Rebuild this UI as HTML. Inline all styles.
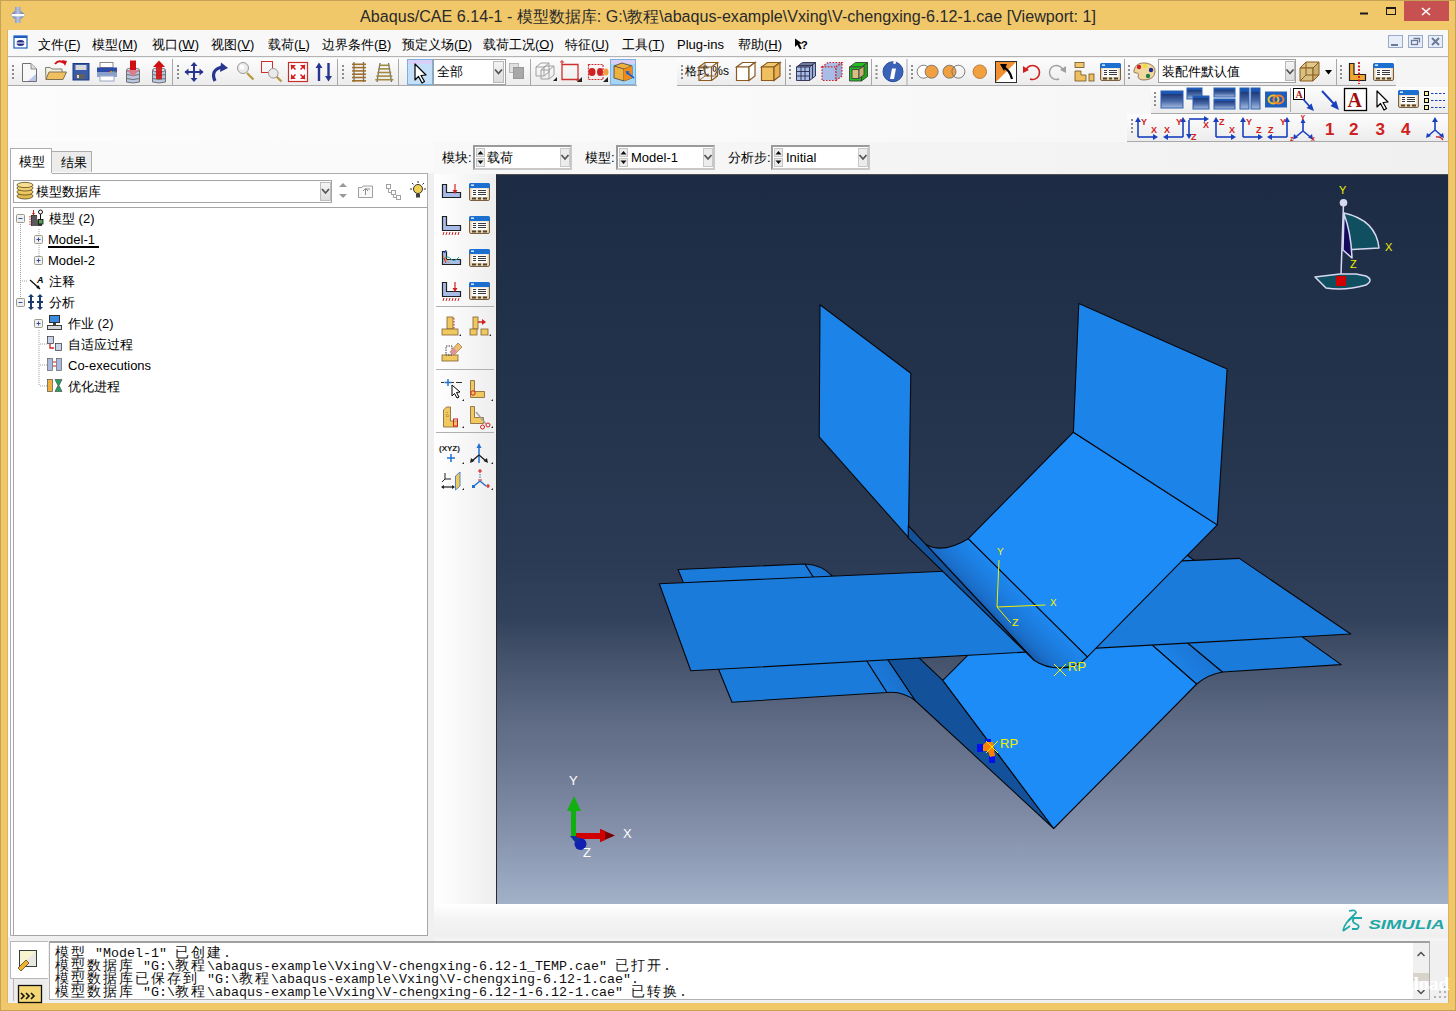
<!DOCTYPE html><html><head><meta charset="utf-8"><style>
*{margin:0;padding:0;box-sizing:border-box}
html,body{width:1456px;height:1011px;overflow:hidden;background:#f0c86a;font-family:"Liberation Sans",sans-serif;font-size:13px;color:#000}
.a{position:absolute;white-space:nowrap}
.t{position:absolute;white-space:nowrap;font-size:13px;line-height:15px;color:#000}
.tb{position:absolute;background:linear-gradient(#fdfdfd,#eeeeee);border-bottom:1px solid #a9a9a9}
.mono{position:absolute;font-family:"Liberation Mono",monospace;font-size:13.33px;line-height:13px;white-space:pre;color:#000}
.cj{letter-spacing:2px;font-size:14px}
u{text-decoration:underline;text-underline-offset:1px}
</style></head><body>
<div class="a" style="left:0px;top:0px;width:1456px;height:1011px;background:#f0c86a;border:1px solid #c7a254"></div>
<div class="t" style="left:0px;top:7px;width:1456px;text-align:center;font-size:16.13px;line-height:18px;color:#2a2a2a">Abaqus/CAE 6.14-1 - 模型数据库: G:\教程\abaqus-example\Vxing\V-chengxing-6.12-1.cae [Viewport: 1]</div>
<div class="a" style="left:1404px;top:1px;width:45px;height:20px;background:#c75050"></div>
<div class="a" style="left:8px;top:30px;width:1440px;height:973px;background:#f0f0f0"></div>
<div class="a" style="left:8px;top:30px;width:1440px;height:27px;background:#f8f8f8;border-bottom:1px solid #b4b4b4"></div>
<div class="a" style="left:8px;top:58px;width:1440px;height:84px;background:linear-gradient(90deg,#fcfcfc 0%,#f9f9f9 55%,#f5f5f5 100%)"></div>
<div class="a" style="left:8px;top:58px;width:629px;height:28px;background:linear-gradient(#fdfdfd,#ececec);border-bottom:1px solid #a9a9a9"></div>
<div class="a" style="left:677px;top:58px;width:719px;height:28px;background:linear-gradient(#fdfdfd,#ececec);border-bottom:1px solid #a9a9a9"></div>
<div class="a" style="left:1151px;top:87px;width:297px;height:27px;background:linear-gradient(#fdfdfd,#ececec);border-bottom:1px solid #a9a9a9"></div>
<div class="a" style="left:1127px;top:114px;width:321px;height:28px;background:linear-gradient(#fdfdfd,#ececec);border-bottom:1px solid #a9a9a9"></div>
<div class="a" style="left:434px;top:142px;width:1014px;height:32px;background:linear-gradient(90deg,#f8f8f8,#f0f0f0)"></div>
<div class="a" style="left:8px;top:142px;width:426px;height:31px;background:#fafafa"></div>
<div class="a" style="left:8px;top:173px;width:2px;height:764px;background:#fdfdfd"></div>
<div class="a" style="left:7px;top:30px;width:1px;height:973px;background:#dcb460"></div>
<div class="a" style="left:1448px;top:30px;width:1px;height:973px;background:#dcb460"></div>
<div class="a" style="left:10px;top:173px;width:418px;height:763px;background:#fff;border:1px solid #adadad"></div>
<div class="a" style="left:434px;top:174px;width:62px;height:730px;background:linear-gradient(90deg,#ffffff,#eeeeee)"></div>
<div class="a" style="left:496px;top:174px;width:952px;height:730px;background:linear-gradient(#1d2b45 0%,#213049 17%,#27364f 40%,#2c3b55 53%,#33425c 61%,#45526c 66.4%,#626e88 76%,#67738d 79%,#8591ab 90%,#a2b0c8 100%);border-left:1px solid #2a2a2a;border-top:1px solid #505050"></div>
<div class="a" style="left:434px;top:904px;width:1014px;height:38px;background:linear-gradient(#ffffff,#f4f4f4 40%,#efefef 85%,#f8f8f8)"></div>
<div class="a" style="left:428px;top:936px;width:6px;height:6px;background:#f0f0f0"></div>
<div class="a" style="left:10px;top:941px;width:1438px;height:62px;background:#f0f0f0"></div>
<div class="a" style="left:49px;top:941px;width:1381px;height:59px;background:#fff;border-top:2px solid #a0a0a0;border-left:1px solid #b0b0b0;border-right:1px solid #b0b0b0;border-bottom:1px solid #b0b0b0"></div>
<div class="a" style="left:1413px;top:943px;width:16px;height:56px;background:#f0f0f0"></div>
<div class="a" style="left:1413px;top:973px;width:16px;height:8px;background:#d8d4cc"></div>
<div class="t" style="left:38px;top:37px;font-size:13px">文件(<u>F</u>)</div>
<div class="t" style="left:92px;top:37px;font-size:13px">模型(<u>M</u>)</div>
<div class="t" style="left:152px;top:37px;font-size:13px">视口(<u>W</u>)</div>
<div class="t" style="left:211px;top:37px;font-size:13px">视图(<u>V</u>)</div>
<div class="t" style="left:268px;top:37px;font-size:13px">载荷(<u>L</u>)</div>
<div class="t" style="left:322px;top:37px;font-size:13px">边界条件(<u>B</u>)</div>
<div class="t" style="left:402px;top:37px;font-size:13px">预定义场(<u>D</u>)</div>
<div class="t" style="left:483px;top:37px;font-size:13px">载荷工况(<u>O</u>)</div>
<div class="t" style="left:565px;top:37px;font-size:13px">特征(<u>U</u>)</div>
<div class="t" style="left:622px;top:37px;font-size:13px">工具(<u>T</u>)</div>
<div class="t" style="left:677px;top:37px;font-size:13px">Plug-ins</div>
<div class="t" style="left:738px;top:37px;font-size:13px">帮助(<u>H</u>)</div>
<div class="a" style="left:10px;top:148px;width:42px;height:25px;background:#fff;border:1px solid #adadad;border-bottom:none"></div>
<div class="a" style="left:52px;top:151px;width:40px;height:21px;background:#ececec;border:1px solid #adadad;border-bottom:none;border-left:none"></div>
<div class="a" style="left:11px;top:173px;width:41px;height:1px;background:#fff"></div>
<div class="t" style="left:19px;top:154px;">模型</div>
<div class="t" style="left:61px;top:155px;">结果</div>
<div class="a" style="left:13px;top:180px;width:319px;height:23px;background:#fff;border:1px solid #a5a5a5"></div>
<div class="a" style="left:320px;top:182px;width:11px;height:19px;background:linear-gradient(#f4f4f4,#dedede);border:1px solid #bdbdbd"></div>
<div class="t" style="left:36px;top:184px;">模型数据库</div>
<div class="a" style="left:13px;top:207px;width:415px;height:729px;background:#fff;border:1px solid #a5a5a5"></div>
<div class="t" style="left:49px;top:211px;font-size:13px">模型 (2)</div>
<div class="t" style="left:48px;top:232px;font-size:13px">Model-1</div>
<div class="t" style="left:48px;top:253px;font-size:13px">Model-2</div>
<div class="t" style="left:49px;top:274px;font-size:13px">注释</div>
<div class="t" style="left:49px;top:295px;font-size:13px">分析</div>
<div class="t" style="left:68px;top:316px;font-size:13px">作业 (2)</div>
<div class="t" style="left:68px;top:337px;font-size:13px">自适应过程</div>
<div class="t" style="left:68px;top:358px;font-size:13px">Co-executions</div>
<div class="t" style="left:68px;top:379px;font-size:13px">优化进程</div>
<div class="a" style="left:48px;top:246px;width:51px;height:2px;background:#000"></div>
<div class="t" style="left:442px;top:150px;">模块:</div>
<div class="t" style="left:585px;top:150px;">模型:</div>
<div class="t" style="left:728px;top:150px;">分析步:</div>
<div class="a" style="left:473px;top:145px;width:99px;height:25px;background:#fff;border:2px solid #9a9a9a;border-right-color:#c8c8c8;border-bottom-color:#c8c8c8"></div>
<div class="a" style="left:476px;top:148px;width:9px;height:9px;background:#ececec;border:1px solid #c4c4c4"></div>
<div class="a" style="left:476px;top:158px;width:9px;height:9px;background:#ececec;border:1px solid #c4c4c4"></div>
<div class="a" style="left:560px;top:148px;width:10px;height:19px;background:#ececec;border:1px solid #c8c8c8"></div>
<div class="t" style="left:487px;top:150px;">载荷</div>
<div class="a" style="left:616px;top:145px;width:99px;height:25px;background:#fff;border:2px solid #9a9a9a;border-right-color:#c8c8c8;border-bottom-color:#c8c8c8"></div>
<div class="a" style="left:619px;top:148px;width:9px;height:9px;background:#ececec;border:1px solid #c4c4c4"></div>
<div class="a" style="left:619px;top:158px;width:9px;height:9px;background:#ececec;border:1px solid #c4c4c4"></div>
<div class="a" style="left:703px;top:148px;width:10px;height:19px;background:#ececec;border:1px solid #c8c8c8"></div>
<div class="t" style="left:631px;top:150px;">Model-1</div>
<div class="a" style="left:771px;top:145px;width:99px;height:25px;background:#fff;border:2px solid #9a9a9a;border-right-color:#c8c8c8;border-bottom-color:#c8c8c8"></div>
<div class="a" style="left:774px;top:148px;width:9px;height:9px;background:#ececec;border:1px solid #c4c4c4"></div>
<div class="a" style="left:774px;top:158px;width:9px;height:9px;background:#ececec;border:1px solid #c4c4c4"></div>
<div class="a" style="left:858px;top:148px;width:10px;height:19px;background:#ececec;border:1px solid #c8c8c8"></div>
<div class="t" style="left:786px;top:150px;">Initial</div>
<div class="a" style="left:433px;top:59px;width:73px;height:26px;background:#fff;border:1px solid #a0a0a0"></div>
<div class="a" style="left:493px;top:61px;width:11px;height:22px;background:linear-gradient(#f4f4f4,#dcdcdc);border:1px solid #b8b8b8"></div>
<div class="t" style="left:437px;top:64px;">全部</div>
<div class="a" style="left:1158px;top:59px;width:138px;height:24px;background:#fff;border:1px solid #a0a0a0"></div>
<div class="a" style="left:1285px;top:61px;width:10px;height:20px;background:linear-gradient(#f4f4f4,#dcdcdc);border:1px solid #b8b8b8"></div>
<div class="t" style="left:1162px;top:64px;">装配件默认值</div>
<div class="t" style="left:685px;top:64px;font-size:12px">格式 %s</div>
<div class="mono" style="left:55px;top:947px;color:#101010"><span class="cj">模型</span> "Model-1" <span class="cj">已创建</span>.</div>
<div class="mono" style="left:55px;top:960px;color:#101010"><span class="cj">模型数据库</span> "G:\<span class="cj">教程</span>\abaqus-example\Vxing\V-chengxing-6.12-1_TEMP.cae" <span class="cj">已打开</span>.</div>
<div class="mono" style="left:55px;top:973px;color:#101010"><span class="cj">模型数据库已保存到</span> "G:\<span class="cj">教程</span>\abaqus-example\Vxing\V-chengxing-6.12-1.cae".</div>
<div class="mono" style="left:55px;top:986px;color:#101010"><span class="cj">模型数据库</span> "G:\<span class="cj">教程</span>\abaqus-example\Vxing\V-chengxing-6.12-1-6.12-1.cae" <span class="cj">已转换</span>.</div>
<div class="a" style="left:10px;top:941px;width:38px;height:38px;background:#fff;border:1px solid #b8b8b8;border-right:none"></div>
<div class="a" style="left:13px;top:979px;width:34px;height:22px;background:#ececec;border-left:1px solid #b8b8b8"></div>
<svg class="a" style="left:0;top:0" width="1456" height="1011" viewBox="0 0 1456 1011"><defs><linearGradient id="wg" x1="0" y1="0" x2="0" y2="1"><stop offset="0" stop-color="#1a58b8"/><stop offset="0.15" stop-color="#1a58b8"/><stop offset="0.2" stop-color="#203a78"/><stop offset="0.6" stop-color="#4a6aa8"/><stop offset="1" stop-color="#a8bce0"/></linearGradient></defs><defs><linearGradient id="tig" x1="0" x2="1"><stop offset="0" stop-color="#4a62a8"/><stop offset="0.5" stop-color="#b8c4e0"/><stop offset="1" stop-color="#4a62a8"/></linearGradient></defs><path d="M15,7 L20.5,7 L20.5,10.5 L25.2,15 L20.5,19.5 L20.5,23 L15,23 L15,19.5 L10.7,15 L15,10.5 Z" fill="url(#tig)"/><path d="M11.5,14 L24.5,14 L24.5,16.3 L11.5,16.3 Z" fill="#fff"/><rect x="1360" y="12.5" width="8" height="2" fill="#1a1a1a"/><rect x="1386.5" y="7.5" width="9" height="7" fill="none" stroke="#1a1a1a" stroke-width="1"/><rect x="1386" y="7" width="10" height="2" fill="#1a1a1a"/><path d="M1422,8 L1430,15 M1430,8 L1422,15" stroke="#fff" stroke-width="1.6"/><rect x="14" y="36" width="13" height="12" fill="#fff" stroke="#1a5fc0" stroke-width="1.2"/><rect x="14" y="36" width="13" height="2" fill="#1a5fc0"/><ellipse cx="20.5" cy="43" rx="4" ry="3" fill="#2a2f8a"/><rect x="16" y="42.5" width="9" height="1" fill="#fff"/><path d="M795,38.5 L795,47 L797.3,44.8 L800,49.5 L801.8,48.5 L799.3,43.8 L802.3,43.5 Z" fill="#000"/><text x="801" y="48.5" font-family="Liberation Sans" font-size="11" font-weight="bold">?</text><rect x="1388.5" y="35.5" width="14" height="12" fill="#e8eef8" stroke="#9aaac8"/><rect x="1408.5" y="35.5" width="14" height="12" fill="#e8eef8" stroke="#9aaac8"/><rect x="1428.5" y="35.5" width="14" height="12" fill="#e8eef8" stroke="#9aaac8"/><rect x="1391" y="44" width="7" height="2" fill="#6a7a98"/><rect x="1411.5" y="40.5" width="6" height="4" fill="none" stroke="#6a7a98" stroke-width="1.3"/><path d="M1413.5,38.5 h6 v4" fill="none" stroke="#6a7a98" stroke-width="1.3"/><path d="M1432,38 L1439,45 M1439,38 L1432,45" stroke="#6a7a98" stroke-width="2"/><rect x="12" y="65" width="2" height="2" fill="#8c8c8c"/><rect x="12" y="69" width="2" height="2" fill="#8c8c8c"/><rect x="12" y="73" width="2" height="2" fill="#8c8c8c"/><rect x="12" y="77" width="2" height="2" fill="#8c8c8c"/><path d="M22.5,63.5 L31,63.5 L36.5,69 L36.5,81.5 L22.5,81.5 Z" fill="#f8f8f8" stroke="#707070"/><path d="M31,63.5 L31,69 L36.5,69" fill="#ddd" stroke="#909090"/><path d="M28,81 L36,81 L36,74 Z" fill="#b8c8e8"/><path d="M45.5,67.5 L50,67.5 L52,69 L62,69 L62,79.5 L46,79.5 Z" fill="#f4f0e0" stroke="#808070"/><path d="M46,79.5 L49,72 L66.5,72 L63,79.5 Z" fill="#f0c060" stroke="#807050"/><path d="M55,64 Q59,59 64,63" fill="none" stroke="#d01010" stroke-width="2"/><path d="M62,60 L67,61 L65,66 Z" fill="#d01010"/><rect x="73" y="63.5" width="16" height="16.5" fill="#3a5ca8" stroke="#1a3a88"/><rect x="75.5" y="65" width="11" height="5" fill="#d8d8d8"/><rect x="76" y="74" width="9" height="5" fill="#606060"/><rect x="77" y="75" width="2" height="3" fill="#ddd"/><rect x="100" y="62.5" width="13" height="5" fill="#fff" stroke="#888"/><path d="M97,67.5 L117,67.5 L117,77 L97,77 Z" fill="#2c4ca8"/><path d="M97,72 L117,72 L117,77 L97,77 Z" fill="#8ca0d0"/><rect x="100" y="76" width="14" height="5" fill="#fff" stroke="#98a8c8"/><rect x="110" y="71" width="2" height="1.5" fill="#f08020"/><rect x="112.5" y="71" width="2" height="1.5" fill="#20c0a0"/><rect x="115" y="71" width="1.5" height="1.5" fill="#f03030"/><path d="M126.5,70 L126.5,82 Q133,84 139.5,82 L139.5,70" fill="#b8c8e0" stroke="#707070"/><ellipse cx="133" cy="70" rx="6.5" ry="2" fill="#d8e0f0" stroke="#707070"/><path d="M126.5,74.5 Q133,76.5 139.5,74.5 M126.5,78.5 Q133,80.5 139.5,78.5" fill="none" stroke="#707070"/><rect x="130" y="60.5" width="6" height="10" fill="#d01010"/><path d="M127,70 L133,77 L139,70 Z" fill="#d88090"/><path d="M152.5,70 L152.5,82 Q159,84 165.5,82 L165.5,70" fill="#b8c8e0" stroke="#707070"/><ellipse cx="159" cy="70" rx="6.5" ry="2" fill="#d8e0f0" stroke="#707070"/><path d="M152.5,74.5 Q159,76.5 165.5,74.5 M152.5,78.5 Q159,80.5 165.5,78.5" fill="none" stroke="#707070"/><rect x="156" y="66" width="6" height="13" fill="#d01010" opacity="0.9"/><path d="M153,67 L159,60.5 L165,67 Z" fill="#d01010"/><rect x="172" y="59" width="1" height="26" fill="#a8a8a8"/><rect x="177" y="65" width="2" height="2" fill="#8c8c8c"/><rect x="177" y="69" width="2" height="2" fill="#8c8c8c"/><rect x="177" y="73" width="2" height="2" fill="#8c8c8c"/><rect x="177" y="77" width="2" height="2" fill="#8c8c8c"/><path d="M194,63 L194,81 M185,72 L203,72" stroke="#26358f" stroke-width="2"/><path d="M194,62 L190.5,66 L197.5,66 Z M194,82 L190.5,78 L197.5,78 Z M184.5,72 L188.5,68.5 L188.5,75.5 Z M203.5,72 L199.5,68.5 L199.5,75.5 Z" fill="#26358f"/><path d="M215,81 Q210,70 222,67" fill="none" stroke="#26358f" stroke-width="3.2"/><path d="M221,62.5 L228,68 L220,72 Z" fill="#26358f"/><line x1="247" y1="73" x2="253.5" y2="79.5" stroke="#b8983c" stroke-width="2.2"/><circle cx="243" cy="68" r="5.5" fill="#eaeaea" stroke="#9a9a9a"/><circle cx="242" cy="67" r="2.5" fill="#fff"/><rect x="261.5" y="61.5" width="11" height="11" fill="none" stroke="#d03030"/><line x1="276" y1="76" x2="281.5" y2="81.5" stroke="#b8983c" stroke-width="2.2"/><circle cx="273.3" cy="73.3" r="4.8" fill="#eaeaea" stroke="#9a9a9a"/><rect x="288.5" y="62.5" width="19" height="19" fill="#fff" stroke="#c83030" stroke-width="1.2"/><path d="M291,65 L296,65 L291,70 Z M305,65 L300,65 L305,70 Z M291,79 L296,79 L291,74 Z M305,79 L300,79 L305,74 Z" fill="#d82020"/><path d="M291,65 L295.5,69.5 M305,65 L300.5,69.5 M291,79 L295.5,74.5 M305,79 L300.5,74.5" stroke="#d82020" stroke-width="1.5"/><path d="M319,67 L319,81 M328.5,63 L328.5,77" stroke="#26358f" stroke-width="2.4"/><path d="M319,62.5 L315.5,68 L322.5,68 Z M328.5,81.5 L325,76 L332,76 Z" fill="#26358f"/><rect x="337" y="59" width="1" height="26" fill="#a8a8a8"/><rect x="342" y="65" width="2" height="2" fill="#8c8c8c"/><rect x="342" y="69" width="2" height="2" fill="#8c8c8c"/><rect x="342" y="73" width="2" height="2" fill="#8c8c8c"/><rect x="342" y="77" width="2" height="2" fill="#8c8c8c"/><path d="M354,62 L354,82 M363.5,62 L363.5,82" stroke="#707070" stroke-width="1.3"/><rect x="352" y="63.5" width="14" height="1.6" fill="#a0702a"/><rect x="352" y="66.8" width="14" height="1.6" fill="#a0702a"/><rect x="352" y="70.1" width="14" height="1.6" fill="#a0702a"/><rect x="352" y="73.4" width="14" height="1.6" fill="#a0702a"/><rect x="352" y="76.7" width="14" height="1.6" fill="#a0702a"/><rect x="352" y="80.0" width="14" height="1.6" fill="#a0702a"/><path d="M380,63 L377,82 M388.5,63 L391.5,82" stroke="#707070" stroke-width="1.3"/><rect x="379.3" y="64.5" width="10" height="1.6" fill="#a08a40"/><rect x="378.3" y="68.1" width="12" height="1.6" fill="#a08a40"/><rect x="377.3" y="71.7" width="14" height="1.6" fill="#a08a40"/><rect x="376.3" y="75.3" width="16" height="1.6" fill="#a08a40"/><rect x="375.3" y="78.9" width="18" height="1.6" fill="#a08a40"/><rect x="398" y="59" width="1" height="26" fill="#a8a8a8"/><rect x="407.5" y="59.5" width="25" height="25" fill="#c4e0f8" stroke="#7ab0e0"/><rect x="408" y="60" width="24" height="4" fill="#d8d0f8"/><path d="M415,64 L415,80 L418.5,76.5 L422,83 L424.5,81.5 L421,75.5 L426,75 Z" fill="#fff" stroke="#000" stroke-width="1.2" stroke-linejoin="round"/><path d="M495,69.5 L498.5,73.5 L502,69.5" fill="none" stroke="#555" stroke-width="1.8"/><rect x="509.5" y="63.5" width="9" height="9" fill="#e0e0e0" stroke="#b8b8b8"/><rect x="513.5" y="67.5" width="10" height="11" fill="#a8a8a8" stroke="#989898"/><rect x="530" y="59" width="1" height="26" fill="#a8a8a8"/><g fill="none" stroke="#a0a0a0"><path d="M536,67 L541,63 L549,63 L544,67 Z M536,67 L536,76 L544,76 L544,67 M544,76 L549,72 L549,63"/><path d="M541,70 L546,66 L554,66 L554,75 L549,79 L541,79 Z M541,70 L549,70 L549,79 M549,70 L554,66"/></g><path d="M553,81 L557,81 L557,77 Z" fill="#222"/><path d="M562,64.5 L578,64.5 L578,79.5 L562,79.5 Z" fill="none" stroke="#d03030" stroke-width="1.3"/><path d="M560,62 h4 M562,60 v4 M576,80 h4 M578,78 v4" stroke="#d03030"/><path d="M577,82 L582,82 L582,77 Z" fill="#222"/><path d="M588.5,64.5 L603,64.5 L603,79.5 L588.5,79.5 Z" fill="none" stroke="#d03030" stroke-width="1.2" stroke-dasharray="2,1"/><ellipse cx="592" cy="72" rx="3.5" ry="4" fill="#d02020"/><ellipse cx="600" cy="72" rx="3" ry="4" fill="#d02020"/><ellipse cx="606" cy="72" rx="2.5" ry="3.5" fill="#f0a040"/><path d="M603,82 L608,82 L608,77 Z" fill="#222"/><rect x="610.5" y="59.5" width="25" height="25" fill="#a8d4f4" stroke="#7ab0e0"/><rect x="611" y="60" width="24" height="4" fill="#d8d0f8"/><path d="M614,66 L622,63 L632,66 L632,78 L624,81 L614,78 Z" fill="#f0b040" stroke="#404040" stroke-width="0.8"/><path d="M614,66 L624,69 L632,66 M624,69 L624,81" fill="none" stroke="#404040" stroke-width="0.8"/><path d="M624,69 L632,66 L632,78 L624,81 Z" fill="#f08a18"/><path d="M634,78 L627,72.5" stroke="#1a60d0" stroke-width="1.6"/><path d="M625.5,71 L630,71.5 L627,75 Z" fill="#1a60d0"/><rect x="681" y="65" width="2" height="2" fill="#8c8c8c"/><rect x="681" y="69" width="2" height="2" fill="#8c8c8c"/><rect x="681" y="73" width="2" height="2" fill="#8c8c8c"/><rect x="681" y="77" width="2" height="2" fill="#8c8c8c"/><g fill="none" stroke="#8a5a20" stroke-width="1.2"><path d="M699,67 L705,62.5 L717.5,62.5 L711.5,67 Z M699,67 L699,80.5 L711.5,80.5 L711.5,67 M711.5,80.5 L717.5,76 L717.5,62.5"/><path d="M705,62.5 L705,76 L699,80.5 M705,76 L717.5,76" stroke-width="0.9"/></g><g fill="#fff" stroke="#8a5a20" stroke-width="1.2"><path d="M736.5,67 L742.5,62.5 L755,62.5 L749,67 Z"/><path d="M736.5,67 L749,67 L749,80.5 L736.5,80.5 Z"/><path d="M749,67 L755,62.5 L755,76 L749,80.5 Z"/></g><g stroke="#8a5a20" stroke-width="1.2"><path d="M761.5,67 L767.5,62.5 L780,62.5 L774,67 Z" fill="#f0c870"/><path d="M761.5,67 L774,67 L774,80.5 L761.5,80.5 Z" fill="#f0c060"/><path d="M774,67 L780,62.5 L780,76 L774,80.5 Z" fill="#e8b050"/></g><rect x="785" y="59" width="1" height="26" fill="#a8a8a8"/><rect x="789" y="65" width="2" height="2" fill="#8c8c8c"/><rect x="789" y="69" width="2" height="2" fill="#8c8c8c"/><rect x="789" y="73" width="2" height="2" fill="#8c8c8c"/><rect x="789" y="77" width="2" height="2" fill="#8c8c8c"/><g stroke="#2a2a4a" stroke-width="0.9"><path d="M796.5,67 L802.5,62.5 L815.5,62.5 L809.5,67 Z" fill="#a8bce8"/><path d="M796.5,67 L809.5,67 L809.5,80.5 L796.5,80.5 Z" fill="#a8bce8"/><path d="M809.5,67 L815.5,62.5 L815.5,76 L809.5,80.5 Z" fill="#98acd8"/><path d="M801,67 v13.5 M805,67 v13.5 M796.5,71.5 h13 M796.5,76 h13 M800.5,64 h13 M812.5,65 v13 M798.5,65.5 h13" fill="none"/></g><g stroke="#d02020" stroke-width="1.2" stroke-dasharray="1.5,1.5"><path d="M822,67 L828,62.5 L842,62.5 L836,67 Z" fill="#a8bce8"/><path d="M822,67 L836,67 L836,80.5 L822,80.5 Z" fill="#a8bce8"/><path d="M836,67 L842,62.5 L842,76 L836,80.5 Z" fill="#98acd8"/></g><g stroke="#404040" stroke-width="0.9"><path d="M849.5,67 L855.5,62.5 L867.5,62.5 L861.5,67 Z" fill="#20c020"/><path d="M849.5,67 L861.5,67 L861.5,81 L849.5,81 Z" fill="#20c020"/><path d="M861.5,67 L867.5,62.5 L867.5,76.5 L861.5,81 Z" fill="#18a818"/><path d="M852,69.5 L859,69.5 L859,78.5 L852,78.5 Z" fill="#d8c080"/><path d="M859,69.5 L864,66 L864,75 L859,78.5 Z" fill="#c8b070"/></g><rect x="871" y="59" width="1" height="26" fill="#a8a8a8"/><rect x="875.5" y="65" width="2" height="2" fill="#8c8c8c"/><rect x="875.5" y="69" width="2" height="2" fill="#8c8c8c"/><rect x="875.5" y="73" width="2" height="2" fill="#8c8c8c"/><rect x="875.5" y="77" width="2" height="2" fill="#8c8c8c"/><circle cx="893" cy="71.7" r="10" fill="#3a62b8" stroke="#2a4a98"/><path d="M894.5,64 a1.5,1.5 0 1,1 0.1,0 Z" fill="#fff"/><path d="M892,68.5 L896,68.5 L894,79 L890,79 Z" fill="#fff"/><rect x="906.5" y="59" width="1" height="26" fill="#a8a8a8"/><rect x="911" y="65" width="2" height="2" fill="#8c8c8c"/><rect x="911" y="69" width="2" height="2" fill="#8c8c8c"/><rect x="911" y="73" width="2" height="2" fill="#8c8c8c"/><rect x="911" y="77" width="2" height="2" fill="#8c8c8c"/><g stroke="#707070" stroke-width="0.9"><circle cx="923.6" cy="71.7" r="6.5" fill="#fff"/><circle cx="931.6" cy="71.7" r="6.5" fill="#f0a040"/></g><g stroke="#707070" stroke-width="0.9"><circle cx="949.5" cy="71.7" r="6.5" fill="#f0a040"/><circle cx="958.4" cy="71.7" r="6.5" fill="none"/></g><circle cx="979.8" cy="71.7" r="6.8" fill="#f0a040" stroke="#a06020" stroke-width="0.7"/><rect x="995.5" y="61.5" width="21" height="21" fill="#fff" stroke="#303030"/><path d="M996,62 L1016,62 L996,82 Z" fill="#f09030"/><path d="M1012,79 Q1010,70 1003,67" fill="none" stroke="#000" stroke-width="2.2"/><path d="M1000,64 L1007,64 L1004,71 Z" fill="#000"/><path d="M1026,70 A7,7 0 1,1 1030,79" fill="none" stroke="#d02020" stroke-width="1.6"/><path d="M1023,66 L1029,70 L1023,73 Z" fill="#d02020"/><path d="M1063,70 A7,7 0 1,0 1059,79" fill="none" stroke="#a0a0a0" stroke-width="1.4"/><path d="M1066,66 L1060,70 L1066,73 Z" fill="#a0a0a0"/><g stroke="#705020" stroke-width="0.8"><rect x="1075" y="62.5" width="9" height="5" fill="#f0c870"/><path d="M1075,71 L1081,71 L1081,75 L1086,75 L1086,81 L1075,81 Z" fill="#f0c060"/><rect x="1089" y="74" width="5" height="7" fill="#f0c060"/></g><g transform="translate(1100,63)"><rect x="0.5" y="0.5" width="20" height="17" rx="1.5" fill="#e4d2b4" stroke="#7a6040"/><path d="M0,5 L0,2 Q0,0 2,0 L19,0 Q21,0 21,2 L21,5 Z" fill="#1a6fd0"/><rect x="2" y="1.5" width="3" height="1.3" fill="#fff"/><rect x="2.5" y="5.5" width="16" height="8.5" fill="#fbfbfb"/><path d="M4,7.5h3M9,7.5h8M4,9.5h3M9,9.5h8M4,11.5h3M9,11.5h8" stroke="#3a3a3a" stroke-width="1"/><path d="M3,15.5h4M9,15.5h3M14,15.5h4" stroke="#54442a" stroke-width="2"/></g><rect x="1124" y="59" width="1" height="26" fill="#a8a8a8"/><rect x="1128" y="65" width="2" height="2" fill="#8c8c8c"/><rect x="1128" y="69" width="2" height="2" fill="#8c8c8c"/><rect x="1128" y="73" width="2" height="2" fill="#8c8c8c"/><rect x="1128" y="77" width="2" height="2" fill="#8c8c8c"/><path d="M1134,70 Q1136,62 1146,63 Q1156,65 1155,72 Q1154,80 1144,80 Q1138,80 1138,76 Q1140,73 1136,73 Q1133,73 1134,70 Z" fill="#f0d8a0" stroke="#806040" stroke-width="0.8"/><circle cx="1139" cy="67" r="2.2" fill="#d02020"/><circle cx="1145" cy="66" r="2" fill="#f0e020"/><circle cx="1151" cy="70" r="2.2" fill="#1a2a90"/><circle cx="1148" cy="76" r="2.2" fill="#208040"/><path d="M1286.5,69.5 L1290,73.5 L1293.5,69.5" fill="none" stroke="#555" stroke-width="1.8"/><g stroke="#8a5a20" stroke-width="1"><path d="M1300,68 L1306,62 L1319,62 L1313,68 Z" fill="#e0c888"/><path d="M1300,68 L1313,68 L1313,81 L1300,81 Z" fill="#d8c080"/><path d="M1313,68 L1319,62 L1319,75 L1313,81 Z" fill="#c8b070"/><path d="M1306,62 L1306,75 L1300,81 M1306,75 L1319,75" fill="none"/></g><path d="M1325,70 L1332,70 L1328.5,74.5 Z" fill="#000"/><rect x="1336" y="59" width="1" height="26" fill="#a8a8a8"/><rect x="1340" y="65" width="2" height="2" fill="#8c8c8c"/><rect x="1340" y="69" width="2" height="2" fill="#8c8c8c"/><rect x="1340" y="73" width="2" height="2" fill="#8c8c8c"/><rect x="1340" y="77" width="2" height="2" fill="#8c8c8c"/><path d="M1349.5,63.5 L1354,63.5 L1354,74.5 L1365.5,74.5 L1365.5,80.5 L1349.5,80.5 Z" fill="#f0a830" stroke="#202020" stroke-width="1.2"/><path d="M1359,62 L1359,84" stroke="#d01010" stroke-width="1.8" stroke-dasharray="2,1.5"/><g transform="translate(1373,63)"><rect x="0.5" y="0.5" width="20" height="17" rx="1.5" fill="#e4d2b4" stroke="#7a6040"/><path d="M0,5 L0,2 Q0,0 2,0 L19,0 Q21,0 21,2 L21,5 Z" fill="#1a6fd0"/><rect x="2" y="1.5" width="3" height="1.3" fill="#fff"/><rect x="2.5" y="5.5" width="16" height="8.5" fill="#fbfbfb"/><path d="M4,7.5h3M9,7.5h8M4,9.5h3M9,9.5h8M4,11.5h3M9,11.5h8" stroke="#3a3a3a" stroke-width="1"/><path d="M3,15.5h4M9,15.5h3M14,15.5h4" stroke="#54442a" stroke-width="2"/></g><rect x="1154" y="92" width="2" height="2" fill="#8c8c8c"/><rect x="1154" y="96" width="2" height="2" fill="#8c8c8c"/><rect x="1154" y="100" width="2" height="2" fill="#8c8c8c"/><rect x="1154" y="104" width="2" height="2" fill="#8c8c8c"/><rect x="1161" y="91" width="22" height="17" fill="url(#wg)" stroke="#2a60b0"/><rect x="1187" y="88" width="15" height="11" fill="url(#wg)" stroke="#2a60b0"/><rect x="1193" y="96" width="16" height="13" fill="url(#wg)" stroke="#2a60b0"/><rect x="1214" y="88" width="21" height="9" fill="url(#wg)" stroke="#2a60b0"/><rect x="1214" y="99" width="21" height="10" fill="url(#wg)" stroke="#2a60b0"/><rect x="1240" y="88" width="9" height="21" fill="url(#wg)" stroke="#2a60b0"/><rect x="1251" y="88" width="9" height="21" fill="url(#wg)" stroke="#2a60b0"/><rect x="1265.5" y="92" width="21" height="15" fill="#1a5fc0" stroke="#2a60b0"/><ellipse cx="1273.5" cy="99.5" rx="5" ry="4" fill="none" stroke="#f0c020" stroke-width="2"/><ellipse cx="1278.5" cy="99.5" rx="5" ry="4" fill="none" stroke="#f08030" stroke-width="2"/><rect x="1290" y="88" width="1" height="24" fill="#a8a8a8"/><rect x="1293.5" y="88.5" width="11" height="11" fill="#fff" stroke="#000"/><text x="1295.5" y="98" font-family="Liberation Serif" font-size="10" fill="#a01010" font-weight="bold">A</text><path d="M1303,99 L1311,108" stroke="#1a40c0" stroke-width="1.8"/><path d="M1314,111 L1306.5,108 L1311.5,103.5 Z" fill="#1a40c0"/><path d="M1322,91 L1335,105" stroke="#1a40c0" stroke-width="2"/><path d="M1339,110 L1330.5,106 L1336,100.5 Z" fill="#1a40c0"/><rect x="1344.5" y="88.5" width="22" height="22" fill="#fff" stroke="#000" stroke-width="1.3"/><text x="1347.5" y="107" font-family="Liberation Serif" font-size="20" fill="#a01010" font-weight="bold">A</text><path d="M1377,91 L1377,107 L1380.5,103.5 L1384,110 L1386.5,108.5 L1383,102.5 L1388,102 Z" fill="#fff" stroke="#000" stroke-width="1.2" stroke-linejoin="round"/><g transform="translate(1398,90)"><rect x="0.5" y="0.5" width="20" height="17" rx="1.5" fill="#e4d2b4" stroke="#7a6040"/><path d="M0,5 L0,2 Q0,0 2,0 L19,0 Q21,0 21,2 L21,5 Z" fill="#1a6fd0"/><rect x="2" y="1.5" width="3" height="1.3" fill="#fff"/><rect x="2.5" y="5.5" width="16" height="8.5" fill="#fbfbfb"/><path d="M4,7.5h3M9,7.5h8M4,9.5h3M9,9.5h8M4,11.5h3M9,11.5h8" stroke="#3a3a3a" stroke-width="1"/><path d="M3,15.5h4M9,15.5h3M14,15.5h4" stroke="#54442a" stroke-width="2"/></g><rect x="1424.5" y="91.5" width="4" height="4" fill="#f8f0a0" stroke="#000"/><path d="M1431,93.5 h14" stroke="#1a40c0" stroke-dasharray="2.5,1.5"/><rect x="1424.5" y="98.5" width="4" height="4" fill="#f8f0a0" stroke="#000"/><path d="M1431,100.5 h14" stroke="#1a40c0" stroke-dasharray="2.5,1.5"/><rect x="1424.5" y="105.5" width="4" height="4" fill="#f8f0a0" stroke="#000"/><path d="M1431,107.5 h14" stroke="#1a40c0" stroke-dasharray="2.5,1.5"/><rect x="1131" y="119" width="2" height="2" fill="#8c8c8c"/><rect x="1131" y="123" width="2" height="2" fill="#8c8c8c"/><rect x="1131" y="127" width="2" height="2" fill="#8c8c8c"/><rect x="1131" y="131" width="2" height="2" fill="#8c8c8c"/><path d="M1138,121 L1138,137" stroke="#1a40c0" stroke-width="1.6"/><path d="M1138,117 L1135,122 L1141,122 Z" fill="#1a40c0"/><path d="M1138,137 L1155,137" stroke="#1a40c0" stroke-width="1.6"/><path d="M1158,137 L1153,134 L1153,140 Z" fill="#1a40c0"/><text x="1141" y="125" font-family="Liberation Sans" font-size="9" font-weight="bold" fill="#d02020">Y</text><text x="1151" y="133" font-family="Liberation Sans" font-size="9" font-weight="bold" fill="#d02020">X</text><path d="M1183,121 L1183,137" stroke="#1a40c0" stroke-width="1.6"/><path d="M1183,117 L1180,122 L1186,122 Z" fill="#1a40c0"/><path d="M1166,137 L1183,137" stroke="#1a40c0" stroke-width="1.6"/><path d="M1163,137 L1168,134 L1168,140 Z" fill="#1a40c0"/><text x="1176" y="125" font-family="Liberation Sans" font-size="9" font-weight="bold" fill="#d02020">Y</text><text x="1164" y="133" font-family="Liberation Sans" font-size="9" font-weight="bold" fill="#d02020">X</text><path d="M1189,120 L1189,136" stroke="#1a40c0" stroke-width="1.6"/><path d="M1189,139 L1186,134 L1192,134 Z" fill="#1a40c0"/><path d="M1189,119 L1206,119" stroke="#1a40c0" stroke-width="1.6"/><path d="M1209,119 L1204,116 L1204,122 Z" fill="#1a40c0"/><text x="1191" y="140" font-family="Liberation Sans" font-size="9" font-weight="bold" fill="#d02020">Z</text><text x="1203" y="128" font-family="Liberation Sans" font-size="9" font-weight="bold" fill="#d02020">X</text><path d="M1216,121 L1216,137" stroke="#1a40c0" stroke-width="1.6"/><path d="M1216,117 L1213,122 L1219,122 Z" fill="#1a40c0"/><path d="M1216,137 L1233,137" stroke="#1a40c0" stroke-width="1.6"/><path d="M1236,137 L1231,134 L1231,140 Z" fill="#1a40c0"/><text x="1219" y="125" font-family="Liberation Sans" font-size="9" font-weight="bold" fill="#d02020">Z</text><text x="1229" y="133" font-family="Liberation Sans" font-size="9" font-weight="bold" fill="#d02020">X</text><path d="M1243,121 L1243,137" stroke="#1a40c0" stroke-width="1.6"/><path d="M1243,117 L1240,122 L1246,122 Z" fill="#1a40c0"/><path d="M1243,137 L1260,137" stroke="#1a40c0" stroke-width="1.6"/><path d="M1263,137 L1258,134 L1258,140 Z" fill="#1a40c0"/><text x="1246" y="125" font-family="Liberation Sans" font-size="9" font-weight="bold" fill="#d02020">Y</text><text x="1256" y="133" font-family="Liberation Sans" font-size="9" font-weight="bold" fill="#d02020">Z</text><path d="M1287,121 L1287,137" stroke="#1a40c0" stroke-width="1.6"/><path d="M1287,117 L1284,122 L1290,122 Z" fill="#1a40c0"/><path d="M1270,137 L1287,137" stroke="#1a40c0" stroke-width="1.6"/><path d="M1267,137 L1272,134 L1272,140 Z" fill="#1a40c0"/><text x="1280" y="125" font-family="Liberation Sans" font-size="9" font-weight="bold" fill="#d02020">Y</text><text x="1268" y="133" font-family="Liberation Sans" font-size="9" font-weight="bold" fill="#d02020">Z</text><path d="M1303,121 L1303,131 M1303,131 L1294.5,138 M1303,131 L1311.5,138" stroke="#1a40c0" stroke-width="1.6"/><path d="M1303,118 L1300.5,123 L1305.5,123 Z M1293,139.5 L1294,134 L1298,137.5 Z M1313,139.5 L1308,137.5 L1312,134 Z" fill="#1a40c0"/><text x="1300.5" y="120" font-family="Liberation Sans" font-size="7" font-weight="bold" fill="#d02020">Y</text><text x="1290" y="141" font-family="Liberation Sans" font-size="7" font-weight="bold" fill="#d02020">z</text><text x="1311" y="141" font-family="Liberation Sans" font-size="7" font-weight="bold" fill="#d02020">x</text><text x="1325" y="135" font-family="Liberation Sans" font-size="17" font-weight="bold" fill="#d02020">1</text><text x="1349" y="135" font-family="Liberation Sans" font-size="17" font-weight="bold" fill="#d02020">2</text><text x="1375.5" y="135" font-family="Liberation Sans" font-size="17" font-weight="bold" fill="#d02020">3</text><text x="1401" y="135" font-family="Liberation Sans" font-size="17" font-weight="bold" fill="#d02020">4</text><path d="M1435,121 L1435,130 M1435,130 L1428,136 M1435,130 L1442,136" stroke="#1a40c0" stroke-width="1.6"/><path d="M1435,117 L1432,122 L1438,122 Z M1426,138 L1427,133 L1431,136 Z M1444,138 L1439,136 L1443,133 Z" fill="#1a40c0"/><path d="M1436,137 Q1441,136 1443,140" fill="none" stroke="#d02020" stroke-width="1.3"/><path d="M477.5,154.5 L480.5,151 L483.5,154.5 Z M477.5,160.5 L480.5,164 L483.5,160.5 Z" fill="#101010"/><path d="M561.5,155 L565,159 L568.5,155" fill="none" stroke="#555" stroke-width="1.8"/><path d="M620.5,154.5 L623.5,151 L626.5,154.5 Z M620.5,160.5 L623.5,164 L626.5,160.5 Z" fill="#101010"/><path d="M704.5,155 L708,159 L711.5,155" fill="none" stroke="#555" stroke-width="1.8"/><path d="M775.5,154.5 L778.5,151 L781.5,154.5 Z M775.5,160.5 L778.5,164 L781.5,160.5 Z" fill="#101010"/><path d="M859.5,155 L863,159 L866.5,155" fill="none" stroke="#555" stroke-width="1.8"/><g stroke="#5a4a20" stroke-width="0.8"><ellipse cx="25" cy="196" rx="8" ry="3" fill="#e0b850"/><ellipse cx="25" cy="192" rx="8" ry="3" fill="#f0c860"/><ellipse cx="25" cy="188" rx="8" ry="3" fill="#f0d070"/><ellipse cx="25" cy="185" rx="8" ry="2.6" fill="#f8e090"/></g><path d="M322,189 L325.5,193 L329,189" fill="none" stroke="#555" stroke-width="1.8"/><path d="M339,187 L343,183 L347,187 Z M339,194 L343,198 L347,194 Z" fill="#9a9a9a"/><path d="M358.5,187.5 L362,187.5 L363,186 L372.5,186 L372.5,197.5 L358.5,197.5 Z" fill="#f8f8f8" stroke="#a0a0a0"/><path d="M365.5,195 L365.5,189 M363,191 L365.5,188.5 L368,191 M365.5,189 L370,189" fill="none" stroke="#909090"/><g fill="none" stroke="#a0a0a0"><rect x="386.5" y="184.5" width="4" height="4"/><rect x="391.5" y="190.5" width="4" height="4"/><rect x="396.5" y="195.5" width="4" height="4"/><path d="M388.5,189 L388.5,192.5 L391.5,192.5 M393.5,195 L393.5,197.5 L396.5,197.5"/></g><circle cx="418" cy="189" r="4.5" fill="#f0d050" stroke="#303030"/><rect x="416" y="194" width="4" height="3.5" fill="#404040"/><path d="M410,189 h2 M424,189 h2 M418,181 v2 M412,183 l1.5,1.5 M424,183 l-1.5,1.5" stroke="#303030"/><g stroke="#a0a0a0" stroke-dasharray="1,1" fill="none"><path d="M20.5,224 V303 M39,229 V260 M27,281 H20.5 M39,330 V386 M47,344 H39 M47,365 H39 M47,386 H39"/></g><rect x="16.5" y="214.5" width="8" height="8" rx="1" fill="#f0f0f0" stroke="#9a9a8a"/><path d="M18.5,218.5 h4" stroke="#3050a0"/><rect x="34.5" y="235.5" width="8" height="8" rx="1" fill="#f0f0f0" stroke="#9a9a8a"/><path d="M36.5,239.5 h4" stroke="#3050a0"/><path d="M38.5,237.5 v4" stroke="#3050a0"/><rect x="34.5" y="256.5" width="8" height="8" rx="1" fill="#f0f0f0" stroke="#9a9a8a"/><path d="M36.5,260.5 h4" stroke="#3050a0"/><path d="M38.5,258.5 v4" stroke="#3050a0"/><rect x="16.5" y="298.5" width="8" height="8" rx="1" fill="#f0f0f0" stroke="#9a9a8a"/><path d="M18.5,302.5 h4" stroke="#3050a0"/><rect x="34.5" y="319.5" width="8" height="8" rx="1" fill="#f0f0f0" stroke="#9a9a8a"/><path d="M36.5,323.5 h4" stroke="#3050a0"/><path d="M38.5,321.5 v4" stroke="#3050a0"/><path d="M31,215 L37,215 L37,219.5 L42,219.5 L42,226 L31,226 Z" fill="#3c3c3c"/><rect x="32.5" y="216.5" width="1" height="1" fill="#b0b0b0"/><rect x="34.5" y="216.5" width="1" height="1" fill="#b0b0b0"/><rect x="36.5" y="216.5" width="1" height="1" fill="#b0b0b0"/><rect x="32.5" y="218.5" width="1" height="1" fill="#b0b0b0"/><rect x="34.5" y="218.5" width="1" height="1" fill="#b0b0b0"/><rect x="36.5" y="218.5" width="1" height="1" fill="#b0b0b0"/><rect x="32.5" y="220.5" width="1" height="1" fill="#b0b0b0"/><rect x="34.5" y="220.5" width="1" height="1" fill="#b0b0b0"/><rect x="36.5" y="220.5" width="1" height="1" fill="#b0b0b0"/><rect x="32.5" y="222.5" width="1" height="1" fill="#b0b0b0"/><rect x="34.5" y="222.5" width="1" height="1" fill="#b0b0b0"/><rect x="36.5" y="222.5" width="1" height="1" fill="#b0b0b0"/><rect x="32.5" y="224.5" width="1" height="1" fill="#b0b0b0"/><rect x="34.5" y="224.5" width="1" height="1" fill="#b0b0b0"/><rect x="36.5" y="224.5" width="1" height="1" fill="#b0b0b0"/><path d="M30,216 v10" stroke="#d02020" stroke-dasharray="1.5,1"/><path d="M33.5,210 v4" stroke="#d02020"/><path d="M32,213 L33.5,215.5 L35,213 Z" fill="#d02020"/><circle cx="40.5" cy="212" r="2" fill="#fff" stroke="#101010"/><path d="M40.5,214 v5" stroke="#101010"/><rect x="38.5" y="219.5" width="4.5" height="4.5" fill="#50a050" stroke="#101010" stroke-width="0.8"/><path d="M30,280 L40,289" stroke="#101010" stroke-width="1.3"/><text x="37" y="283" font-family="Liberation Sans" font-size="9" font-style="italic" font-weight="bold">A</text><circle cx="38" cy="287" r="1.5" fill="#101010"/><g fill="#1a3a70"><path d="M31,294 L34,297 L28,297 Z M31,310 L34,307 L28,307 Z M40,294 L43,297 L37,297 Z M40,310 L43,307 L37,307 Z"/><rect x="30" y="297" width="2" height="10"/><rect x="39" y="297" width="2" height="10"/><rect x="28" y="301" width="6" height="2"/><rect x="37" y="301" width="6" height="2"/></g><rect x="49.5" y="315.5" width="10" height="7" fill="#3a8ae0" stroke="#303030"/><rect x="53" y="323" width="3" height="2" fill="#404040"/><rect x="47.5" y="325.5" width="14" height="4" fill="#d8d8d8" stroke="#404040"/><g stroke="#303030" stroke-width="0.7"><rect x="47.5" y="336.5" width="6" height="7" fill="#c8d4ec"/><rect x="55.5" y="343.5" width="6" height="7" fill="#c8d4ec"/></g><path d="M50,344 L50,348 L54,348" fill="none" stroke="#d02020" stroke-width="1.3"/><g stroke="#606060" stroke-width="0.7"><rect x="47.5" y="358.5" width="5" height="12" fill="#a8bce0"/><rect x="56.5" y="358.5" width="5" height="12" fill="#a8bce0"/></g><path d="M53,362 h3 M53,366 h3" stroke="#d02020"/><g stroke="#505050" stroke-width="0.7"><rect x="47.5" y="379.5" width="5" height="12" fill="#f0b040"/><path d="M55,379.5 h7 l-3,6 l3,6 h-7 l3,-6 Z" fill="#20a060"/></g><g transform="translate(469,183)"><rect x="0.5" y="0.5" width="20" height="17" rx="1.5" fill="#e4d2b4" stroke="#7a6040"/><path d="M0,5 L0,2 Q0,0 2,0 L19,0 Q21,0 21,2 L21,5 Z" fill="#1a6fd0"/><rect x="2" y="1.5" width="3" height="1.3" fill="#fff"/><rect x="2.5" y="5.5" width="16" height="8.5" fill="#fbfbfb"/><path d="M4,7.5h3M9,7.5h8M4,9.5h3M9,9.5h8M4,11.5h3M9,11.5h8" stroke="#3a3a3a" stroke-width="1"/><path d="M3,15.5h4M9,15.5h3M14,15.5h4" stroke="#54442a" stroke-width="2"/></g><g transform="translate(469,216)"><rect x="0.5" y="0.5" width="20" height="17" rx="1.5" fill="#e4d2b4" stroke="#7a6040"/><path d="M0,5 L0,2 Q0,0 2,0 L19,0 Q21,0 21,2 L21,5 Z" fill="#1a6fd0"/><rect x="2" y="1.5" width="3" height="1.3" fill="#fff"/><rect x="2.5" y="5.5" width="16" height="8.5" fill="#fbfbfb"/><path d="M4,7.5h3M9,7.5h8M4,9.5h3M9,9.5h8M4,11.5h3M9,11.5h8" stroke="#3a3a3a" stroke-width="1"/><path d="M3,15.5h4M9,15.5h3M14,15.5h4" stroke="#54442a" stroke-width="2"/></g><g transform="translate(469,249)"><rect x="0.5" y="0.5" width="20" height="17" rx="1.5" fill="#e4d2b4" stroke="#7a6040"/><path d="M0,5 L0,2 Q0,0 2,0 L19,0 Q21,0 21,2 L21,5 Z" fill="#1a6fd0"/><rect x="2" y="1.5" width="3" height="1.3" fill="#fff"/><rect x="2.5" y="5.5" width="16" height="8.5" fill="#fbfbfb"/><path d="M4,7.5h3M9,7.5h8M4,9.5h3M9,9.5h8M4,11.5h3M9,11.5h8" stroke="#3a3a3a" stroke-width="1"/><path d="M3,15.5h4M9,15.5h3M14,15.5h4" stroke="#54442a" stroke-width="2"/></g><g transform="translate(469,282)"><rect x="0.5" y="0.5" width="20" height="17" rx="1.5" fill="#e4d2b4" stroke="#7a6040"/><path d="M0,5 L0,2 Q0,0 2,0 L19,0 Q21,0 21,2 L21,5 Z" fill="#1a6fd0"/><rect x="2" y="1.5" width="3" height="1.3" fill="#fff"/><rect x="2.5" y="5.5" width="16" height="8.5" fill="#fbfbfb"/><path d="M4,7.5h3M9,7.5h8M4,9.5h3M9,9.5h8M4,11.5h3M9,11.5h8" stroke="#3a3a3a" stroke-width="1"/><path d="M3,15.5h4M9,15.5h3M14,15.5h4" stroke="#54442a" stroke-width="2"/></g><path d="M442.5,184.5 h4 v8 h14 v5 h-18 Z" fill="#a8bce8" stroke="#202020" stroke-width="1.2"/><path d="M455,184 v8" stroke="#d02020" stroke-width="1.2"/><path d="M452.5,190 L455,194 L457.5,190 Z" fill="#d02020"/><path d="M442.5,216.5 h4 v9 h14 v5 h-18 Z" fill="#a8bce8" stroke="#202020" stroke-width="1.2"/><path d="M444,232 l-1,3 M447,232 l-1,3 M450,232 l-1,3 M453,232 l-1,3 M456,232 l-1,3 M459,232 l-1,3" stroke="#d02020"/><path d="M442.5,251.5 h4 v8 h14 v5 h-18 Z" fill="#a8bce8" stroke="#202020" stroke-width="1.2"/><path d="M444,253 l3,-2 M443,259 q5,-4 8,0 q3,4 8,-2" fill="none" stroke="#20a0a0" stroke-width="1"/><path d="M443,256 q3,3 6,7" fill="none" stroke="#f09020"/><path d="M444,258 l2,5" stroke="#d02020"/><path d="M444,253 l2,-3" stroke="#2040d0"/><path d="M442.5,282.5 h4 v9 h14 v5 h-18 Z" fill="#a8bce8" stroke="#202020" stroke-width="1.2"/><path d="M455,282 v8" stroke="#d02020" stroke-width="1.2"/><path d="M452.5,288 L455,292 L457.5,288 Z" fill="#d02020"/><path d="M444,298 l-1,3 M447,298 l-1,3 M450,298 l-1,3 M453,298 l-1,3 M456,298 l-1,3 M459,298 l-1,3" stroke="#d02020"/><rect x="436" y="306" width="58" height="1" fill="#b0b0b0"/><rect x="436" y="369" width="58" height="1" fill="#b0b0b0"/><rect x="436" y="432" width="58" height="1" fill="#b0b0b0"/><g stroke="#806030" stroke-width="0.8"><rect x="447" y="317" width="6" height="12" fill="#f0c860"/><rect x="442" y="329" width="16" height="6" fill="#f0c860"/><rect x="473" y="317" width="5" height="12" fill="#f0c860"/><rect x="470" y="329" width="7" height="6" fill="#f0c860"/><rect x="481" y="329" width="7" height="6" fill="#f0c860"/><rect x="442" y="355" width="16" height="6" fill="#f0c860"/></g><path d="M454,318 v11" stroke="#d02020" stroke-dasharray="1.5,1.5"/><path d="M478,322 h6" stroke="#d02020" stroke-width="1.5"/><path d="M486,322 L482,319 L482,325 Z" fill="#d02020"/><path d="M459,336 l2,0 l0,-2 Z M489,336 l2,0 l0,-2 Z" fill="#222"/><path d="M446,346 h6 v9 h-6 Z" fill="none" stroke="#404040" stroke-dasharray="1.5,1"/><path d="M450,352 L458,343 L462,347 L454,355 Z" fill="#f0c070" stroke="#806030" stroke-width="0.6"/><path d="M450,352 L454,348 L457,351 L453,355 Z" fill="#e090a0"/><path d="M441,382.5 h3 M446,382.5 h8 M456,382.5 h6" stroke="#303030"/><path d="M448,379 v7 M444.5,382.5 h7" stroke="#2070d0" stroke-width="1.4"/><path d="M452,385 L452,396 L454.5,393.5 L457,398 L459,397 L456.5,392.5 L460,392 Z" fill="#fff" stroke="#000" stroke-width="1"/><path d="M470.5,380.5 h4 v11 h10 v6 h-14 Z" fill="#f0c860" stroke="#806030" stroke-width="0.8"/><circle cx="473" cy="393" r="2.2" fill="none" stroke="#d02020"/><path d="M462,401 l2,0 l0,-2 Z M491,401 l2,0 l0,-2 Z" fill="#222"/><path d="M443.5,410 l3,-3 h4 v14 h7 v6 h-14 Z" fill="#f0c860" stroke="#806030" stroke-width="0.8"/><path d="M447,412 v6 M449,416 h-3" stroke="#a08040" stroke-dasharray="1,1"/><rect x="453.5" y="419" width="4" height="7" fill="none" stroke="#d02020"/><path d="M470.5,406.5 h4 v11 h9 v6 h-13 Z" fill="#f0c860" stroke="#806030" stroke-width="0.8"/><path d="M476,412 L486,424" stroke="#a0a0a0" stroke-width="1.4"/><circle cx="482.5" cy="427" r="2" fill="none" stroke="#d02020"/><circle cx="488" cy="425" r="2" fill="none" stroke="#d02020"/><path d="M462,428 l2,0 l0,-2 Z M491,428 l2,0 l0,-2 Z" fill="#222"/><text x="439" y="451" font-family="Liberation Sans" font-size="8" font-weight="bold" fill="#202020">(XYZ)</text><path d="M451,454 v8 M447,458 h8" stroke="#2070d0" stroke-width="1.5"/><path d="M479,447 v16" stroke="#2070d0" stroke-width="1.5"/><path d="M479,443 L476.5,448 L481.5,448 Z" fill="#2070d0"/><path d="M479,455 L472,461 M479,455 L486,461" stroke="#202020" stroke-width="1.4"/><path d="M470,463 L471,458 L474.5,461 Z M488,463 L483.5,461 L487,458 Z" fill="#202020"/><path d="M462,464 l2,0 l0,-2 Z M491,464 l2,0 l0,-2 Z" fill="#222"/><path d="M445,479 v-6 M445,479 h6 M445,479 l-3,3" stroke="#202020" stroke-width="1"/><path d="M442,487 h12" stroke="#202020" stroke-width="1.2"/><path d="M441,487 L444,485 L444,489 Z M455,487 L452,485 L452,489 Z" fill="#202020"/><path d="M455.5,476 L460,472 L460,486 L455.5,490 Z" fill="#f0c860" stroke="#3070c0" stroke-width="0.8"/><path d="M478,471 h4 M480,469 v4 M478,480 h4" stroke="#d02020" stroke-width="1.2"/><path d="M480,474 v5" stroke="#2070d0" stroke-dasharray="1.5,1"/><path d="M480,481 L474,486 M480,481 L486,486" stroke="#2070d0" stroke-width="1.4"/><path d="M486,486 h4 M488,484 v4" stroke="#d02020" stroke-width="1.2"/><rect x="472" y="485" width="3" height="3" fill="#2070d0"/><path d="M462,490 l2,0 l0,-2 Z M491,490 l2,0 l0,-2 Z" fill="#222"/><rect x="19.5" y="950.5" width="17" height="16" fill="#e8e8e0" stroke="#304040"/><path d="M20,951 L36,951 L20,966 Z" fill="#f8f4d0"/><path d="M18,968 L26,960 L29,963 L21,971 Z" fill="#f0b030" stroke="#403010" stroke-width="0.7"/><rect x="18.5" y="985.5" width="23" height="17" fill="#f4d878" stroke="#101010" stroke-width="1.3"/><path d="M21,993 l3,3 l-3,3 M26,993 l3,3 l-3,3 M31,993 l3,3 l-3,3" fill="none" stroke="#101010" stroke-width="1.6"/><path d="M1417.5,956 L1421,952.5 L1424.5,956" fill="none" stroke="#505050" stroke-width="1.5"/><path d="M1417.5,990 L1421,993.5 L1424.5,990" fill="none" stroke="#505050" stroke-width="1.5"/><g fill="#b0b0b0"><rect x="1434" y="996" width="2" height="2"/><rect x="1439" y="996" width="2" height="2"/><rect x="1444" y="996" width="2" height="2"/><rect x="1439" y="991" width="2" height="2"/><rect x="1444" y="991" width="2" height="2"/><rect x="1444" y="986" width="2" height="2"/></g><text x="1413.5" y="990" font-family="Liberation Serif" font-size="18" font-weight="bold" fill="#fff" textLength="36" lengthAdjust="spacingAndGlyphs">load</text><text x="1368.5" y="929" font-family="Liberation Sans" font-size="12.5" font-weight="bold" font-style="italic" fill="#22a6a6" textLength="76" lengthAdjust="spacingAndGlyphs">SIMULIA</text><path d="M1349,911 Q1356,909 1356,913 L1348,921" fill="none" stroke="#1fa8a8" stroke-width="1.8"/><path d="M1343,931 Q1345,921 1354,917 M1343,931 L1350,926" fill="none" stroke="#1fa8a8" stroke-width="1.6"/><path d="M1362,918 L1354,918 Q1351,922 1356,924 Q1361,926 1357,929 L1352,929" fill="none" stroke="#1fa8a8" stroke-width="1.8"/></svg>
<svg class="a" style="left:0;top:0" width="1456" height="1011" viewBox="0 0 1456 1011">
<defs>
<clipPath id="vpc"><rect x="497" y="174" width="951" height="730"/></clipPath>
<linearGradient id="tipg" gradientUnits="userSpaceOnUse" x1="990" y1="612" x2="1015.8" y2="586.2">
<stop offset="0" stop-color="#1760b4"/><stop offset="0.12" stop-color="#1a6cc6"/><stop offset="0.3" stop-color="#1b74d2"/><stop offset="0.6" stop-color="#1c7ee0"/><stop offset="1" stop-color="#1e88f0"/>
</linearGradient>
<linearGradient id="filg" gradientUnits="userSpaceOnUse" x1="850" y1="630" x2="880" y2="610">
<stop offset="0" stop-color="#1b78d8"/><stop offset="0.5" stop-color="#1a70c8"/><stop offset="1" stop-color="#175fb0"/>
</linearGradient>
<linearGradient id="filg2" gradientUnits="userSpaceOnUse" x1="1160" y1="660" x2="1185" y2="640">
<stop offset="0" stop-color="#1e8af2"/><stop offset="0.5" stop-color="#1c7ee0"/><stop offset="1" stop-color="#1b78d8"/>
</linearGradient>
</defs>
<g clip-path="url(#vpc)" stroke="#05070c" stroke-width="1.1" stroke-linejoin="round">
<path d="M678,569.5 L805,564 L887,692.5 L732,702.2 Z" fill="#1b7bdb"/>
<path d="M805,564 Q822,565 831,575 L915.6,701 Q903,691 887,692.5 Z" fill="url(#filg)"/>
<path d="M831,575 L942.8,680.3 L1053.7,828.5 L915.6,701 Z" fill="#13529a"/>
<path d="M942.8,680.3 L1059.5,563.4 L1196.7,684 L1181,700 L1053.7,828.5 Z" fill="#1e8cf6"/>
<path d="M1059.5,563.4 L1196.7,684 Q1208,674.5 1222.5,672 L1080.5,553.6 Z" fill="url(#filg2)"/>
<path d="M1080.5,553.6 L1222.5,672 L1341.2,664.6 L1177,548 Z" fill="#1b7bdb"/>
<path d="M659.3,583.7 L1239.3,558.4 L1350.7,634 L690.8,670.8 Z" fill="#1b7bdb"/>
<path d="M820,304.7 L910.8,373.3 L908.4,537.4 L819.2,436.9 Z" fill="#1c84e8"/>
<path d="M926,544.6 Q943,554 968.3,538.7 L1087.4,656.8 C1075,671 1050,671 1034,660.2 Z" fill="url(#tipg)"/>
<path d="M908.3,525.7 L1034,660.2 L908.3,537.8 Z" fill="#13529a"/>
<path d="M968.3,538.7 L1073.4,432.2 L1217.3,524.9 L1087.4,656.8 Z" fill="#1e8cf6"/>
<path d="M1078.8,303.6 L1227.1,369.1 L1217.3,524.9 L1073.4,432.2 Z" fill="#1c84e8"/>
</g>
<g stroke="#f0f000" stroke-width="1" fill="none">
<path d="M997,607 L999,560 M997,607 L1045.4,605 M997,607 L1010.8,623"/>
<path d="M1054,664 L1066,676 M1066,664 L1054,676"/>
</g>
<g>
<rect x="977" y="744" width="6" height="8" fill="#0010f0"/><rect x="985" y="739" width="6" height="4" fill="#0010f0"/><rect x="989" y="756" width="6" height="7" fill="#0010f0"/>
<path d="M983,745 L986,742 L993,742 L994,750 L995,756 L990,757 L988,751 L983,751 Z" fill="#ff8000"/>
</g>
<g stroke="#f0f000" stroke-width="1" fill="none"><path d="M986,741 L998,753 M998,741 L986,753"/></g>
<g fill="#f0f000" font-family="Liberation Mono" font-size="11">
<text x="997" y="555">Y</text><text x="1050" y="606">X</text><text x="1012" y="626">Z</text>
</g>
<g fill="#f0f000" font-family="Liberation Sans" font-size="13">
<text x="1068" y="671">RP</text><text x="1000" y="748">RP</text>
</g>
<!-- triad -->
<g>
<rect x="571" y="810" width="5" height="26" fill="#10b010"/>
<path d="M574,796 L567,811 L581,811 Z" fill="#10b010"/>
<rect x="576" y="833" width="25" height="6" fill="#d00000"/>
<path d="M600,829 L615,835.5 L600,842 Z" fill="#7a0000"/>
<path d="M600,829 L605,831 L605,840 L600,842 Z" fill="#d00000"/>
<circle cx="580.5" cy="844" r="6" fill="#1020b0"/>
<path d="M570,836 L576,836 L580,840 L575,842 Z" fill="#1030a0"/>
</g>
<g fill="#ffffff" font-family="Liberation Sans" font-size="13">
<text x="569" y="785">Y</text><text x="623" y="838">X</text><text x="583" y="857">Z</text>
</g>
<!-- sail -->
<g stroke="#d8d8f0" stroke-width="1.5" stroke-linejoin="round">
<path d="M1344,213 Q1376,220 1379,248 L1343,250 Z" fill="#0f4f5f"/>
<path d="M1344,214 Q1351,232 1352,258 L1343,250 Z" fill="#140a5c"/>
<path d="M1343.5,203 L1341,275" fill="none"/>
<path d="M1315,277 L1326,288 Q1345,291 1366,285 Q1374,280 1366,276 L1356,274 L1340,274 Z" fill="#0f4f5f"/>
</g>
<rect x="1336" y="276" width="10" height="10" fill="#d00000"/>
<circle cx="1343.5" cy="202.7" r="3.8" fill="#d8d8f0"/>
<g fill="#f0f000" font-family="Liberation Sans" font-size="11">
<text x="1339" y="194">Y</text><text x="1385" y="251">X</text><text x="1350" y="268">Z</text>
</g>
</svg>
</body></html>
